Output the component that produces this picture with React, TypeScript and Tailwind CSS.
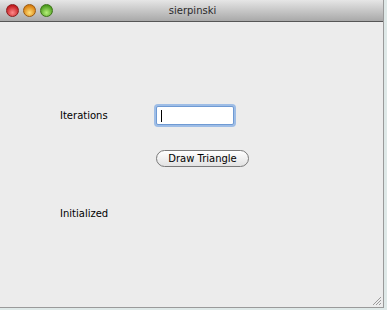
import React from "react";

function Light({ from, to, ring }: { from: string; to: string; ring: string }) {
  return (
    <span
      className="block h-[13px] w-[13px] rounded-full border"
      style={{ background: `radial-gradient(circle at 50% 70%, ${to}, ${from} 75%)`, borderColor: ring }}
    />
  );
}

export default function App() {
  return (
    <div className="h-[310px] w-[387px] bg-[#dfe9e8] font-['DejaVu_Sans',sans-serif]">
      <div className="flex h-[308px] w-[384px] flex-col border-r border-b border-[#9a9a9a] bg-[#ececec]">
        <div className="relative flex h-[22px] shrink-0 items-center border-b border-[#565656] bg-gradient-to-b from-[#e6e6e6] to-[#a9a9a9]">
          <div className="absolute left-[6px] top-[4px] flex gap-[4px]">
            <Light from="#c1191c" to="#ff8a8a" ring="#8a1d1d" />
            <Light from="#d87d0c" to="#ffe07a" ring="#9a5a10" />
            <Light from="#4a9a1c" to="#b6f07a" ring="#3d7318" />
          </div>
          <span className="w-full pl-[2px] text-center text-[10px] leading-none text-[#2a2a2a]">sierpinski</span>
        </div>
        <div className="relative flex-1">
          <div className="grid grid-cols-[96px_auto] items-center pl-[60px] pt-[84px]">
            <span className="text-[10px] text-black">Iterations</span>
            <div className="flex h-[19px] w-[78px] items-center rounded-[2px] border border-[#6f9ad3] bg-white pl-[4px] shadow-[0_0_0_2px_#9ebde6]">
              <span className="block h-[12px] w-px bg-black" />
            </div>
          </div>
          <div className="pl-[156px] pt-[25px]">
            <button className="flex h-[17px] w-[93px] items-center justify-center rounded-full border border-[#7a7a7a] bg-gradient-to-b from-white to-[#e2e2e2] text-[10px] text-black">
              Draw Triangle
            </button>
          </div>
          <div className="pl-[60px] pt-[39px] text-[10px] text-black">Initialized</div>
          <svg className="absolute bottom-[1px] right-[1px]" width="10" height="10" viewBox="0 0 10 10">
            <path d="M9 1L1 9M9 4L4 9M9 7L7 9" stroke="#9a9a9a" strokeWidth="1" />
          </svg>
        </div>
      </div>
    </div>
  );
}
